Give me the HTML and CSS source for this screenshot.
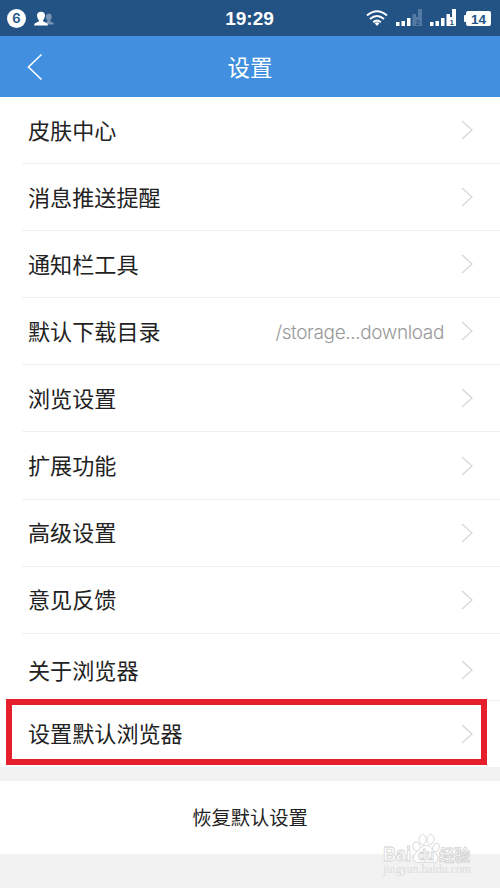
FILE: index.html
```
<!DOCTYPE html>
<html lang="zh-CN">
<head>
    <meta charset="UTF-8">
    <meta name="viewport" content="width=device-width, initial-scale=1.0">
    <title>设置</title>
    <link rel="stylesheet" href="styles.css">
</head>
<body>
    <svg class="symbols" width="0" height="0">
        <symbol id="chevron" viewBox="0 0 12 20">
            <path d="M1 1L11 10L1 19" fill="none" stroke="currentColor" stroke-width="1.4"/>
        </symbol>
    </svg>

    <div class="status-bar">
        <div class="status-left">
            <span class="badge">6</span>
            <svg width="21" height="15" viewBox="0 0 21 15">
                <path d="M11 13.5V12Q13.5 11 13.5 9.5Q11.5 8 11.8 5Q12.2 2.5 14.7 2.5Q17.5 2.5 17.7 5.5Q17.7 8 16.2 9.5V10.5Q20 11.5 20 13.5Z" fill="#7894b5"/>
                <path d="M0 14.5Q0 12 2.5 11.5Q5 11 5 9.5Q3 7.5 3 4.5Q3.2 .8 7 .8Q10.8 .8 11 4.5Q11 7.5 9 9.5Q9 11 11.5 11.5Q14 12 14 14.5Z" fill="#fff"/>
            </svg>
        </div>
        <div class="clock">19:29</div>
        <div class="status-right">
            <svg class="wifi" width="22" height="17" viewBox="0 0 22 17" fill="none" stroke="#fff" stroke-width="2">
                <path d="M1 5.5Q11 -3 21 5.5M4 9Q11 3 18 9M7.2 12.3Q11 9 14.8 12.3"/>
                <path d="M8.6 13.2Q11 11.5 13.4 13.2L11 16Z" fill="#fff" stroke="none"/>
            </svg>
            <svg class="signal" width="26" height="18" viewBox="0 0 26 18">
                <path d="M0 13h3.5v4H0zM5.5 12h3.5v5h-3.5zM11 9h3.5v8h-3.5z" fill="#fff"/>
                <path d="M16.5 5h3.5v3h2V0h4v17h-9.500z" fill="#547aa3"/>
                <text x="19.5" y="16" class="sim">2</text>
            </svg>
            <svg class="signal" width="26" height="18" viewBox="0 0 26 18">
                <path d="M0 13h3.5v4H0zM5.5 12h3.5v5h-3.5zM11 9h3.5v8h-3.5zM16.500 5h3.5v3h2V0h4v17h-9.500z" fill="#fff"/>
                <text x="19.5" y="16" class="sim">1</text>
            </svg>
            <svg class="battery" width="27" height="17" viewBox="0 0 27 17">
                <path d="M4 1H25Q27 1 27 3V14Q27 16 25 16H4Q2 16 2 14V12H1Q0 12 0 11V6Q0 5 1 5H2V3Q2 1 4 1Z" fill="#fff"/>
                <text x="14.5" y="13.5" class="level">14</text>
            </svg>
        </div>
    </div>

    <div class="nav-bar">
        <svg class="back" width="16" height="28" viewBox="0 0 16 28">
            <path d="M14.5 1.5L1.5 14L14.5 26.5" fill="none" stroke="#fff" stroke-width="1.6"/>
        </svg>
        <h1>设置</h1>
    </div>

    <ul class="list">
        <li><span class="label">皮肤中心</span><svg class="arrow"><use href="#chevron"/></svg></li>
        <li><span class="label">消息推送提醒</span><svg class="arrow"><use href="#chevron"/></svg></li>
        <li><span class="label">通知栏工具</span><svg class="arrow"><use href="#chevron"/></svg></li>
        <li><span class="label">默认下载目录</span><span class="value">/storage...download</span><svg class="arrow"><use href="#chevron"/></svg></li>
        <li><span class="label">浏览设置</span><svg class="arrow"><use href="#chevron"/></svg></li>
        <li><span class="label">扩展功能</span><svg class="arrow"><use href="#chevron"/></svg></li>
        <li><span class="label">高级设置</span><svg class="arrow"><use href="#chevron"/></svg></li>
        <li><span class="label">意见反馈</span><svg class="arrow"><use href="#chevron"/></svg></li>
        <li class="about"><span class="label">关于浏览器</span><svg class="arrow"><use href="#chevron"/></svg></li>
        <li class="default-browser"><span class="label">设置默认浏览器</span><svg class="arrow"><use href="#chevron"/></svg><div class="highlight"></div></li>
    </ul>

    <div class="reset">恢复默认设置</div>

    <!-- watermark -->
    <svg class="watermark" width="100" height="56" viewBox="0 0 100 56">
        <g fill="#fff" stroke="#d2d2d2" stroke-width=".8">
            <text x="3" y="31" class="wm-logo" textLength="28" lengthAdjust="spacingAndGlyphs">Bai</text>
            <ellipse cx="36.5" cy="16.500" rx="3.5" ry="4.500" transform="rotate(-15 36.5 16.5)"/>
            <ellipse cx="42.5" cy="9.500" rx="3.5" ry="5"/>
            <ellipse cx="50.5" cy="9.500" rx="3.5" ry="5" transform="rotate(10 50.5 9.5)"/>
            <ellipse cx="56" cy="17.500" rx="3" ry="4.500" transform="rotate(20 56 17.5)"/>
            <path d="M46 15.500C51 15.500 52 19.500 55 22.500C61 29 56 33.500 52 32.500Q46 31.500 40 32.500C34 33.500 31 28 36 22.500C40 19.500 41 15.500 46 15.500Z"/>
            <text x="38" y="30" class="wm-du" textLength="16" lengthAdjust="spacingAndGlyphs">du</text>
            <text x="59" y="31" class="wm-cn">经验</text>
        </g>
        <text x="3" y="43" class="wm-url" textLength="88" lengthAdjust="spacingAndGlyphs">jingyan.baidu.com</text>
    </svg>
</body>
</html>
```

FILE: styles.css
```
* {
    box-sizing: border-box;
}

body {
    margin: 0;
    height: 888px;
    background: #f2f2f2;
    color: #222;
    font-family: "Liberation Sans", "Noto Sans CJK SC", sans-serif;
    overflow: hidden;
    position: relative;
}

.symbols {
    position: absolute;
}

svg {
    flex: none;
}

/* Status bar */
.status-bar {
    display: grid;
    grid-template-columns: 1fr auto 1fr;
    align-items: center;
    height: 36px;
    padding: 0 9px 0 7px;
    background: #235385;
    color: #fff;
}

.status-left,
.status-right {
    display: flex;
    align-items: center;
}

.status-left {
    gap: 8px;
}

.status-right {
    justify-content: flex-end;
}

.badge {
    width: 19px;
    height: 19px;
    border-radius: 50%;
    background: #fff;
    color: #235385;
    font-family: Inter, "Liberation Sans", sans-serif;
    font-size: 13px;
    font-weight: 600;
    line-height: 19px;
    text-align: center;
}

.clock {
    padding: 2px 0 0 1px;
    font-size: 19px;
    font-weight: bold;
}

.wifi {
    margin-right: 8px;
}

.signal {
    margin-right: 8px;
}

.sim {
    fill: #235385;
    font-size: 8px;
    font-weight: bold;
}

.level {
    fill: #235385;
    font-size: 13.5px;
    font-weight: bold;
    text-anchor: middle;
}

/* Title bar */
.nav-bar {
    display: grid;
    grid-template-columns: 1fr auto 1fr;
    align-items: center;
    height: 61px;
    padding: 0 27px;
    background: #418fde;
    color: #fff;
}

.nav-bar h1 {
    margin: 0;
    padding-bottom: 2px;
    font-size: 22.5px;
    font-weight: normal;
}

/* Settings list */
.list {
    margin: 0;
    padding: 0 0 0 22px;
    list-style: none;
    background: #fff;
}

.list li {
    display: flex;
    align-items: center;
    height: 67.1px;
    padding: 0 27px 0 6px;
    border-bottom: 1px solid #f0f0f0;
    font-size: 22.1px;
}

.list .about {
    padding-top: 7px;
}

.list .default-browser {
    position: relative;
    height: 66px;
    border-bottom: 0;
}

.label {
    padding-bottom: 3px;
}

.arrow {
    width: 12px;
    height: 20px;
    margin-left: auto;
    color: #d8d8d8;
}

.value {
    margin-left: auto;
    padding-top: 2px;
    color: #999;
    font-family: Inter, "Liberation Sans", sans-serif;
    font-size: 19px;
    font-weight: 300;
    letter-spacing: -0.38px;
}

.value + .arrow {
    margin-left: 17px;
}

.highlight {
    position: absolute;
    top: -2px;
    left: -16px;
    width: 481px;
    height: 66px;
    border: 6px solid #e51f2c;
}

.reset {
    display: flex;
    align-items: center;
    justify-content: center;
    height: 73px;
    margin-top: 14px;
    background: #fff;
    font-size: 19.3px;
}

.watermark {
    position: absolute;
    left: 380px;
    top: 830px;
}

.wm-logo {
    font-size: 21px;
    font-weight: bold;
}

.wm-du {
    font-size: 14px;
    font-weight: bold;
}

.wm-cn {
    font-size: 15.5px;
    font-weight: bold;
}

.wm-url {
    fill: #dcdcdc;
    font-family: "Liberation Serif", serif;
    font-size: 12px;
}
```
